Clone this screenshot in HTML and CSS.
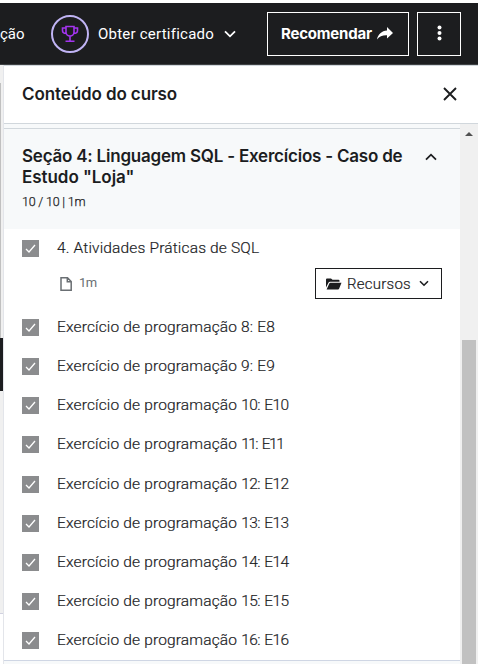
FILE: index.html
```html
<!DOCTYPE html>
<html lang="pt-BR">
<head>
<meta charset="utf-8">
<title>Conteúdo do curso</title>
<link rel="stylesheet" href="styles.css">
</head>
<body>
<header class="topbar">
  <span class="cut">ção</span>
  <span class="trophy"><svg width="18" height="18" viewBox="0 0 18 18" fill="none" stroke="#a435f0" stroke-width="1.6"><path d="M5 1.5h8v5.5a4 4 0 0 1-8 0zM5 3H1.5v2.5c0 1.7 1.3 3 3.8 3M13 3h3.5v2.5c0 1.7-1.3 3-3.8 3M9 11v5M4.5 16.3h9"/></svg></span>
  <span class="cert">Obter certificado</span>
  <svg class="cert-arrow" width="12" height="8" viewBox="0 0 12 8" fill="none" stroke="#fff" stroke-width="1.8"><path d="M1 1.3l5 5 5-5"/></svg>
  <button class="share"><span>Recomendar</span><svg width="16" height="13" viewBox="0 0 16 13" fill="#fff"><path d="M10 0l6 6-6 5.6V8.3C5.800 8.100 2.500 9.200 0 12.500 1 7.200 4.600 3.900 10 3.500z"/></svg></button>
  <button class="more"><svg width="5" height="16" viewBox="0 0 5 16" fill="#fff"><circle cx="2.500" cy="2.500" r="2"/><circle cx="2.500" cy="8" r="2"/><circle cx="2.500" cy="13.500" r="2"/></svg></button>
</header>
<div class="main">
  <div class="behind"><i class="gap"></i><i class="track"></i><i class="dark"></i><i class="pale"></i></div>
  <aside class="panel">
    <div class="panel-head"><h2>Conteúdo do curso</h2><svg width="14" height="14" viewBox="0 0 14 14" fill="none" stroke="#1c1d1f" stroke-width="1.9"><path d="M1 1l12 12M13 1L1 13"/></svg></div>
    <div class="scroll">
      <div class="content">
        <section class="section-head">
          <div><h3><span class="l1">Seção 4: Linguagem SQL - Exercícios - Caso de</span><br><span class="l2">Estudo "Loja"</span></h3><p>10 / 10 | 1m</p></div>
          <svg width="12" height="8" viewBox="0 0 12 8" fill="none" stroke="#1c1d1f" stroke-width="1.8"><path d="M1 6.700l5-5 5 5"/></svg>
        </section>
        <div class="first">
          <span class="check"><svg viewBox="0 0 17 17"><path d="M4 9l3 3 6-7"/></svg></span>
          <div class="first-body">
            <div class="lesson">4. Atividades Práticas de SQL</div>
            <div class="meta">
              <svg width="12" height="14" viewBox="0 0 12 14" fill="none" stroke="#6a6f73" stroke-width="1.5"><path d="M1 .8h6.500L11.200 4.500v8.700H1zM7.300 1v3.800H11"/></svg><span class="dur">1m</span>
              <button class="res"><svg width="16" height="12" viewBox="0 0 16 12" fill="#1c1d1f"><path d="M0 1.500Q0 .5 1 .5h4l1.500 1.300h6q1 0 1 1v1H4Q3 3.800 2.600 4.600L0 9.500zM4.300 4.700H15.500L13.200 10.600Q12.900 11.500 12 11.500H.6L3.300 5.400Q3.600 4.700 4.300 4.700z"/></svg><span>Recursos</span><svg width="10" height="7" viewBox="0 0 10 7" fill="none" stroke="#1c1d1f" stroke-width="1.600"><path d="M1 1.200l4 4 4-4"/></svg></button>
            </div>
          </div>
        </div>
        <ul class="list">
          <li><span class="check"><svg viewBox="0 0 17 17"><path d="M4 9l3 3 6-7"/></svg></span><span class="lesson">Exercício de programação 8: E8</span></li>
          <li><span class="check"><svg viewBox="0 0 17 17"><path d="M4 9l3 3 6-7"/></svg></span><span class="lesson">Exercício de programação 9: E9</span></li>
          <li><span class="check"><svg viewBox="0 0 17 17"><path d="M4 9l3 3 6-7"/></svg></span><span class="lesson">Exercício de programação <span class="n">10: E10</span></span></li>
          <li><span class="check"><svg viewBox="0 0 17 17"><path d="M4 9l3 3 6-7"/></svg></span><span class="lesson">Exercício de programação <span class="nn">11: E11</span></span></li>
          <li><span class="check"><svg viewBox="0 0 17 17"><path d="M4 9l3 3 6-7"/></svg></span><span class="lesson">Exercício de programação <span class="n">12: E12</span></span></li>
          <li><span class="check"><svg viewBox="0 0 17 17"><path d="M4 9l3 3 6-7"/></svg></span><span class="lesson">Exercício de programação <span class="n">13: E13</span></span></li>
          <li><span class="check"><svg viewBox="0 0 17 17"><path d="M4 9l3 3 6-7"/></svg></span><span class="lesson">Exercício de programação <span class="n">14: E14</span></span></li>
          <li><span class="check"><svg viewBox="0 0 17 17"><path d="M4 9l3 3 6-7"/></svg></span><span class="lesson">Exercício de programação <span class="n">15: E15</span></span></li>
          <li><span class="check"><svg viewBox="0 0 17 17"><path d="M4 9l3 3 6-7"/></svg></span><span class="lesson">Exercício de programação <span class="n">16: E16</span></span></li>
        </ul>
        <div class="next"></div>
      </div>
      <div class="bar"><i class="up"></i><i class="thumb"></i></div>
    </div>
  </aside>
</div>
</body>
</html>
```
FILE: styles.css
```css
* { box-sizing: border-box; }
body { margin: 0; width: 478px; height: 664px; overflow: hidden; background: #fff; color: #1c1d1f; font-family: Inter, "Liberation Sans", sans-serif; display: flex; flex-direction: column; padding-top: 3px; }
svg { display: block; flex: none; }
h2, h3, p, ul { margin: 0; padding: 0; }
button { font: inherit; padding: 0; border-radius: 0; display: flex; align-items: center; flex: none; }
.topbar { height: 62px; flex: none; background: #1c1d1f; border-bottom: 1px solid #3e4143; display: flex; align-items: center; color: #fff; white-space: nowrap; }
.cut { width: 51px; flex: none; font: 400 15px/20px Roboto, sans-serif; }
.trophy { width: 38px; height: 38px; flex: none; border: 2px solid #c0b4f4; border-radius: 50%; display: flex; align-items: center; justify-content: center; }
.cert { width: 127px; flex: none; padding-left: 9px; font: 400 15px/20px Roboto, sans-serif; letter-spacing: .23px; }
.cert-arrow { margin-left: 8px; }
.share { margin-left: 31px; width: 142px; height: 44px; border: 1px solid #fff; background: none; color: #fff; padding: 0 0 1px 13px; gap: 5px; font-weight: 700; font-size: 15px; }
.share span { width: 91px; letter-spacing: -.2px; text-align: left; }
.more { margin-left: 8px; width: 44px; height: 44px; border: 1px solid #fff; background: none; justify-content: center; padding-bottom: 1px; }
.main { flex: 1; min-height: 0; display: flex; }
.behind { width: 3px; display: flex; flex-direction: column; background: #fff; }
.gap { height: 18px; background: #f0f0f0; }
.track { height: 255px; background: #f0f0f0; border-left: 1px solid #c0c0c0; }
.dark { height: 53px; background: #1c1d1f; }
.pale { height: 223px; background: #f0f0f0; border-bottom: 1px solid #d1d2e0; }
.panel { flex: 1; min-width: 0; border-left: 1px solid #e3e5ea; display: flex; flex-direction: column; }
.panel-head { height: 59px; flex: none; border-top: 1px solid #d1d7dc; border-bottom: 1px solid #d1d7dc; display: flex; justify-content: space-between; align-items: center; padding: 0 21px 2px 18px; }
h2 { font-size: 17px; line-height: 22px; font-weight: 600; letter-spacing: -.1px; }
.scroll { flex: 1; min-height: 0; display: flex; }
.content { width: 456px; display: flex; flex-direction: column; border-top: 4px solid #f7f9fa; }
.section-head { height: 101px; flex: none; background: #f7f9fa; border-top: 1px solid #d1d7dc; display: flex; justify-content: space-between; padding: 17px 23px 0 18px; }
.section-head svg { margin-top: 7px; }
h3 { font-size: 17px; line-height: 21px; font-weight: 600; white-space: nowrap; }
.l1 { letter-spacing: -.22px; }
.l2 { letter-spacing: -.05px; }
p { font: 300 12.5px/16px Roboto, sans-serif; margin-top: 6px; letter-spacing: -.2px; -webkit-text-stroke: .25px #1c1d1f; }
.first { height: 79px; flex: none; display: flex; padding: 11px 18px 0; gap: 18px; }
.check { width: 17px; height: 17px; flex: none; background: #8b8c8e; }
.check svg { width: 17px; height: 17px; fill: none; stroke: #fff; stroke-width: 1.3; }
.first-body { flex: 1; }
.lesson { font: 300 15.5px/17px Roboto, sans-serif; letter-spacing: .16px; white-space: nowrap; -webkit-text-stroke: .2px #1c1d1f; }
.n { letter-spacing: -.55px; word-spacing: 1px; }
.nn { letter-spacing: -1.5px; word-spacing: 2.4px; }
.meta { display: flex; align-items: center; height: 31px; margin-top: 11px; padding-left: 3px; -webkit-text-stroke: 0; }
.dur { margin-left: 7px; margin-bottom: 2px; font: 400 13px/16px Roboto, sans-serif; letter-spacing: -.5px; color: #6a6f73; }
.res { margin-left: auto; width: 127px; height: 31px; border: 1px solid #1c1d1f; background: #fff; color: #1c1d1f; padding-left: 10px; gap: 5px; font: 300 15px/18px Roboto, sans-serif; -webkit-text-stroke: .2px #1c1d1f; }
.res span { width: 67px; letter-spacing: .25px; text-align: left; }
.list { list-style: none; flex: none; height: 352px; display: grid; grid-template-rows: repeat(9, 39.15px); }
.list li { display: flex; gap: 18px; padding: 11px 18px 0; }
.next { flex: none; height: 4px; border-top: 1px solid #cfd6e4; background: #f7f9fa; }
.bar { width: 18px; background: #f0f0f0; padding: 8px 2px 0; display: flex; flex-direction: column; align-items: center; }
.up { border: 4px solid transparent; border-top: 0; border-bottom: 4px solid #505050; }
.thumb { width: 14px; flex: 1; margin-top: 204px; background: #c1c1c1; }
```
